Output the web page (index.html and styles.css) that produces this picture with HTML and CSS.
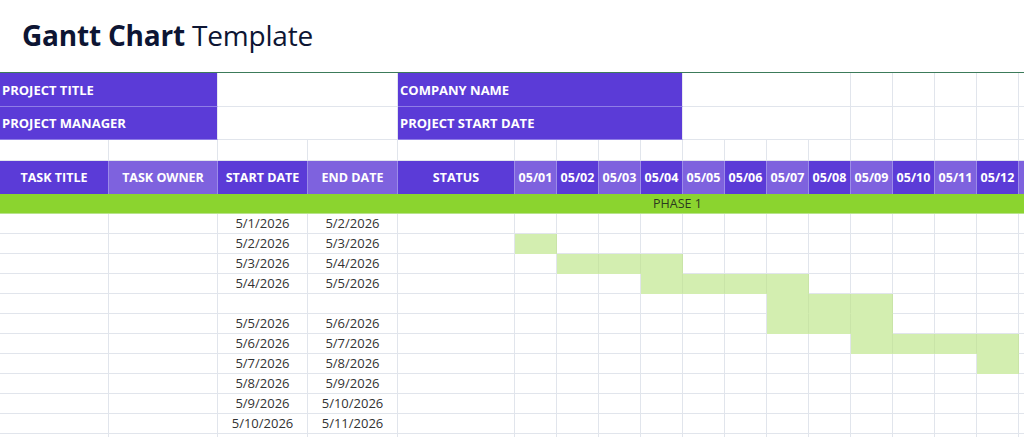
FILE: index.html
```html
<!DOCTYPE html>
<html lang="en">
<head>
<meta charset="utf-8">
<title>Gantt Chart Template</title>
<link rel="stylesheet" href="styles.css">
</head>
<body>
<h1 class="title"><b>Gantt Chart</b>&nbsp;Template</h1>
<div class="sheet">
  <div class="row r-info">
    <div class="c lbl span2">PROJECT TITLE</div>
    <div class="c span2"></div>
    <div class="c lbl span5">COMPANY NAME</div>
    <div class="c span4"></div>
    <div class="c"></div><div class="c"></div><div class="c"></div><div class="c"></div><div class="c"></div>
  </div>
  <div class="row r-info2">
    <div class="c lbl span2">PROJECT MANAGER</div>
    <div class="c span2"></div>
    <div class="c lbl span5">PROJECT START DATE</div>
    <div class="c span4"></div>
    <div class="c"></div><div class="c"></div><div class="c"></div><div class="c"></div><div class="c"></div>
  </div>
  <div class="row r-blank">
    <div class="c"></div><div class="c"></div><div class="c"></div><div class="c"></div><div class="c"></div>
    <div class="c"></div><div class="c"></div><div class="c"></div><div class="c"></div><div class="c"></div><div class="c"></div><div class="c"></div><div class="c"></div><div class="c"></div><div class="c"></div><div class="c"></div><div class="c"></div><div class="c"></div>
  </div>
  <div class="row r-head">
    <div class="c h">TASK TITLE</div>
    <div class="c h alt">TASK OWNER</div>
    <div class="c h">START DATE</div>
    <div class="c h alt">END DATE</div>
    <div class="c h">STATUS</div>
    <div class="c h alt">05/01</div>
    <div class="c h">05/02</div>
    <div class="c h alt">05/03</div>
    <div class="c h">05/04</div>
    <div class="c h alt">05/05</div>
    <div class="c h">05/06</div>
    <div class="c h alt">05/07</div>
    <div class="c h">05/08</div>
    <div class="c h alt">05/09</div>
    <div class="c h">05/10</div>
    <div class="c h alt">05/11</div>
    <div class="c h">05/12</div>
    <div class="c h alt"></div>
  </div>
  <div class="row r-phase">
    <div class="phase">PHASE 1</div>
  </div>

  <div class="row r-data">
    <div class="c"></div><div class="c"></div><div class="c d">5/1/2026</div><div class="c d">5/2/2026</div><div class="c"></div>
    <div class="c"></div><div class="c"></div><div class="c"></div><div class="c"></div><div class="c"></div><div class="c"></div><div class="c"></div><div class="c"></div><div class="c"></div><div class="c"></div><div class="c"></div><div class="c"></div><div class="c"></div>
  </div>
  <div class="row r-data">
    <div class="c"></div><div class="c"></div><div class="c d">5/2/2026</div><div class="c d">5/3/2026</div><div class="c"></div>
    <div class="c bar"></div><div class="c"></div><div class="c"></div><div class="c"></div><div class="c"></div><div class="c"></div><div class="c"></div><div class="c"></div><div class="c"></div><div class="c"></div><div class="c"></div><div class="c"></div><div class="c"></div>
  </div>
  <div class="row r-data">
    <div class="c"></div><div class="c"></div><div class="c d">5/3/2026</div><div class="c d">5/4/2026</div><div class="c"></div>
    <div class="c"></div><div class="c bar"></div><div class="c bar"></div><div class="c bar"></div><div class="c"></div><div class="c"></div><div class="c"></div><div class="c"></div><div class="c"></div><div class="c"></div><div class="c"></div><div class="c"></div><div class="c"></div>
  </div>
  <div class="row r-data">
    <div class="c"></div><div class="c"></div><div class="c d">5/4/2026</div><div class="c d">5/5/2026</div><div class="c"></div>
    <div class="c"></div><div class="c"></div><div class="c"></div><div class="c bar"></div><div class="c bar"></div><div class="c bar"></div><div class="c bar"></div><div class="c"></div><div class="c"></div><div class="c"></div><div class="c"></div><div class="c"></div><div class="c"></div>
  </div>
  <div class="row r-data">
    <div class="c"></div><div class="c"></div><div class="c d"></div><div class="c d"></div><div class="c"></div>
    <div class="c"></div><div class="c"></div><div class="c"></div><div class="c"></div><div class="c"></div><div class="c"></div><div class="c bar"></div><div class="c bar"></div><div class="c bar"></div><div class="c"></div><div class="c"></div><div class="c"></div><div class="c"></div>
  </div>
  <div class="row r-data">
    <div class="c"></div><div class="c"></div><div class="c d">5/5/2026</div><div class="c d">5/6/2026</div><div class="c"></div>
    <div class="c"></div><div class="c"></div><div class="c"></div><div class="c"></div><div class="c"></div><div class="c"></div><div class="c bar"></div><div class="c bar"></div><div class="c bar"></div><div class="c"></div><div class="c"></div><div class="c"></div><div class="c"></div>
  </div>
  <div class="row r-data">
    <div class="c"></div><div class="c"></div><div class="c d">5/6/2026</div><div class="c d">5/7/2026</div><div class="c"></div>
    <div class="c"></div><div class="c"></div><div class="c"></div><div class="c"></div><div class="c"></div><div class="c"></div><div class="c"></div><div class="c"></div><div class="c bar"></div><div class="c bar"></div><div class="c bar"></div><div class="c bar"></div><div class="c"></div>
  </div>
  <div class="row r-data">
    <div class="c"></div><div class="c"></div><div class="c d">5/7/2026</div><div class="c d">5/8/2026</div><div class="c"></div>
    <div class="c"></div><div class="c"></div><div class="c"></div><div class="c"></div><div class="c"></div><div class="c"></div><div class="c"></div><div class="c"></div><div class="c"></div><div class="c"></div><div class="c"></div><div class="c bar"></div><div class="c"></div>
  </div>
  <div class="row r-data">
    <div class="c"></div><div class="c"></div><div class="c d">5/8/2026</div><div class="c d">5/9/2026</div><div class="c"></div>
    <div class="c"></div><div class="c"></div><div class="c"></div><div class="c"></div><div class="c"></div><div class="c"></div><div class="c"></div><div class="c"></div><div class="c"></div><div class="c"></div><div class="c"></div><div class="c"></div><div class="c"></div>
  </div>
  <div class="row r-data">
    <div class="c"></div><div class="c"></div><div class="c d">5/9/2026</div><div class="c d">5/10/2026</div><div class="c"></div>
    <div class="c"></div><div class="c"></div><div class="c"></div><div class="c"></div><div class="c"></div><div class="c"></div><div class="c"></div><div class="c"></div><div class="c"></div><div class="c"></div><div class="c"></div><div class="c"></div><div class="c"></div>
  </div>
  <div class="row r-data">
    <div class="c"></div><div class="c"></div><div class="c d">5/10/2026</div><div class="c d">5/11/2026</div><div class="c"></div>
    <div class="c"></div><div class="c"></div><div class="c"></div><div class="c"></div><div class="c"></div><div class="c"></div><div class="c"></div><div class="c"></div><div class="c"></div><div class="c"></div><div class="c"></div><div class="c"></div><div class="c"></div>
  </div>
  <div class="row r-data">
    <div class="c"></div><div class="c"></div><div class="c d"></div><div class="c d"></div><div class="c"></div>
    <div class="c"></div><div class="c"></div><div class="c"></div><div class="c"></div><div class="c"></div><div class="c"></div><div class="c"></div><div class="c"></div><div class="c"></div><div class="c"></div><div class="c"></div><div class="c"></div><div class="c"></div>
  </div>
</div>
</body>
</html>
```

FILE: styles.css
```css
html, body {
  margin: 0;
  padding: 0;
  background: #ffffff;
}
body {
  width: 1024px;
  height: 437px;
  overflow: hidden;
  font-family: "Open Sans", "Noto Sans", sans-serif;
}
.title {
  margin: 0;
  height: 72px;
  box-sizing: border-box;
  padding: 0 0 2px 22px;
  display: flex;
  align-items: center;
  font-size: 28px;
  font-weight: 400;
  color: #0d1533;
  letter-spacing: -0.2px;
}
.title b {
  font-weight: 700;
}
.sheet {
  width: 1356px;
  border-top: 1px solid #3c7b5a;
}
.row {
  display: grid;
  grid-template-columns: 109px 109px 90px 90px 117px repeat(20, 42px);
}
.r-info { height: 34px; }
.r-info2 { height: 33px; }
.r-blank { height: 21px; }
.r-head { height: 33px; }
.r-phase { height: 20px; }
.r-data { height: 20px; }

.c {
  box-sizing: border-box;
  border-right: 1px solid #e1e5ec;
  border-bottom: 1px solid #e1e5ec;
  min-width: 0;
}
.span2 { grid-column: span 2; }
.span4 { grid-column: span 4; }
.span5 { grid-column: span 5; }

.lbl {
  background: #5b3bd7;
  color: #ffffff;
  font-weight: 700;
  font-size: 13px;
  padding-left: 2px;
  display: flex;
  align-items: center;
  white-space: nowrap;
  border-right-color: #e8e8f2;
  border-bottom-color: #8f7de6;
}
.h {
  background: #5b3bd7;
  color: #ffffff;
  font-weight: 700;
  font-size: 12.5px;
  display: flex;
  align-items: center;
  justify-content: center;
  white-space: nowrap;
  overflow: hidden;
  border-right-color: #9c8ce8;
  border-bottom: none;
}
.h.alt {
  background: #7e62de;
}
.phase {
  grid-column: 1 / -1;
  background: #8bd42f;
  border-bottom: 1px solid #b8e38c;
  box-sizing: border-box;
  text-align: center;
  font-size: 12.5px;
  line-height: 19px;
  color: #2b3a1f;
}
.d {
  font-size: 13px;
  line-height: 19px;
  text-align: center;
  color: #333333;
  white-space: nowrap;
}
.bar {
  background: #d3eeb0;
  border-right-color: #c9e4a8;
  border-bottom-color: #d3eeb0;
}
```
